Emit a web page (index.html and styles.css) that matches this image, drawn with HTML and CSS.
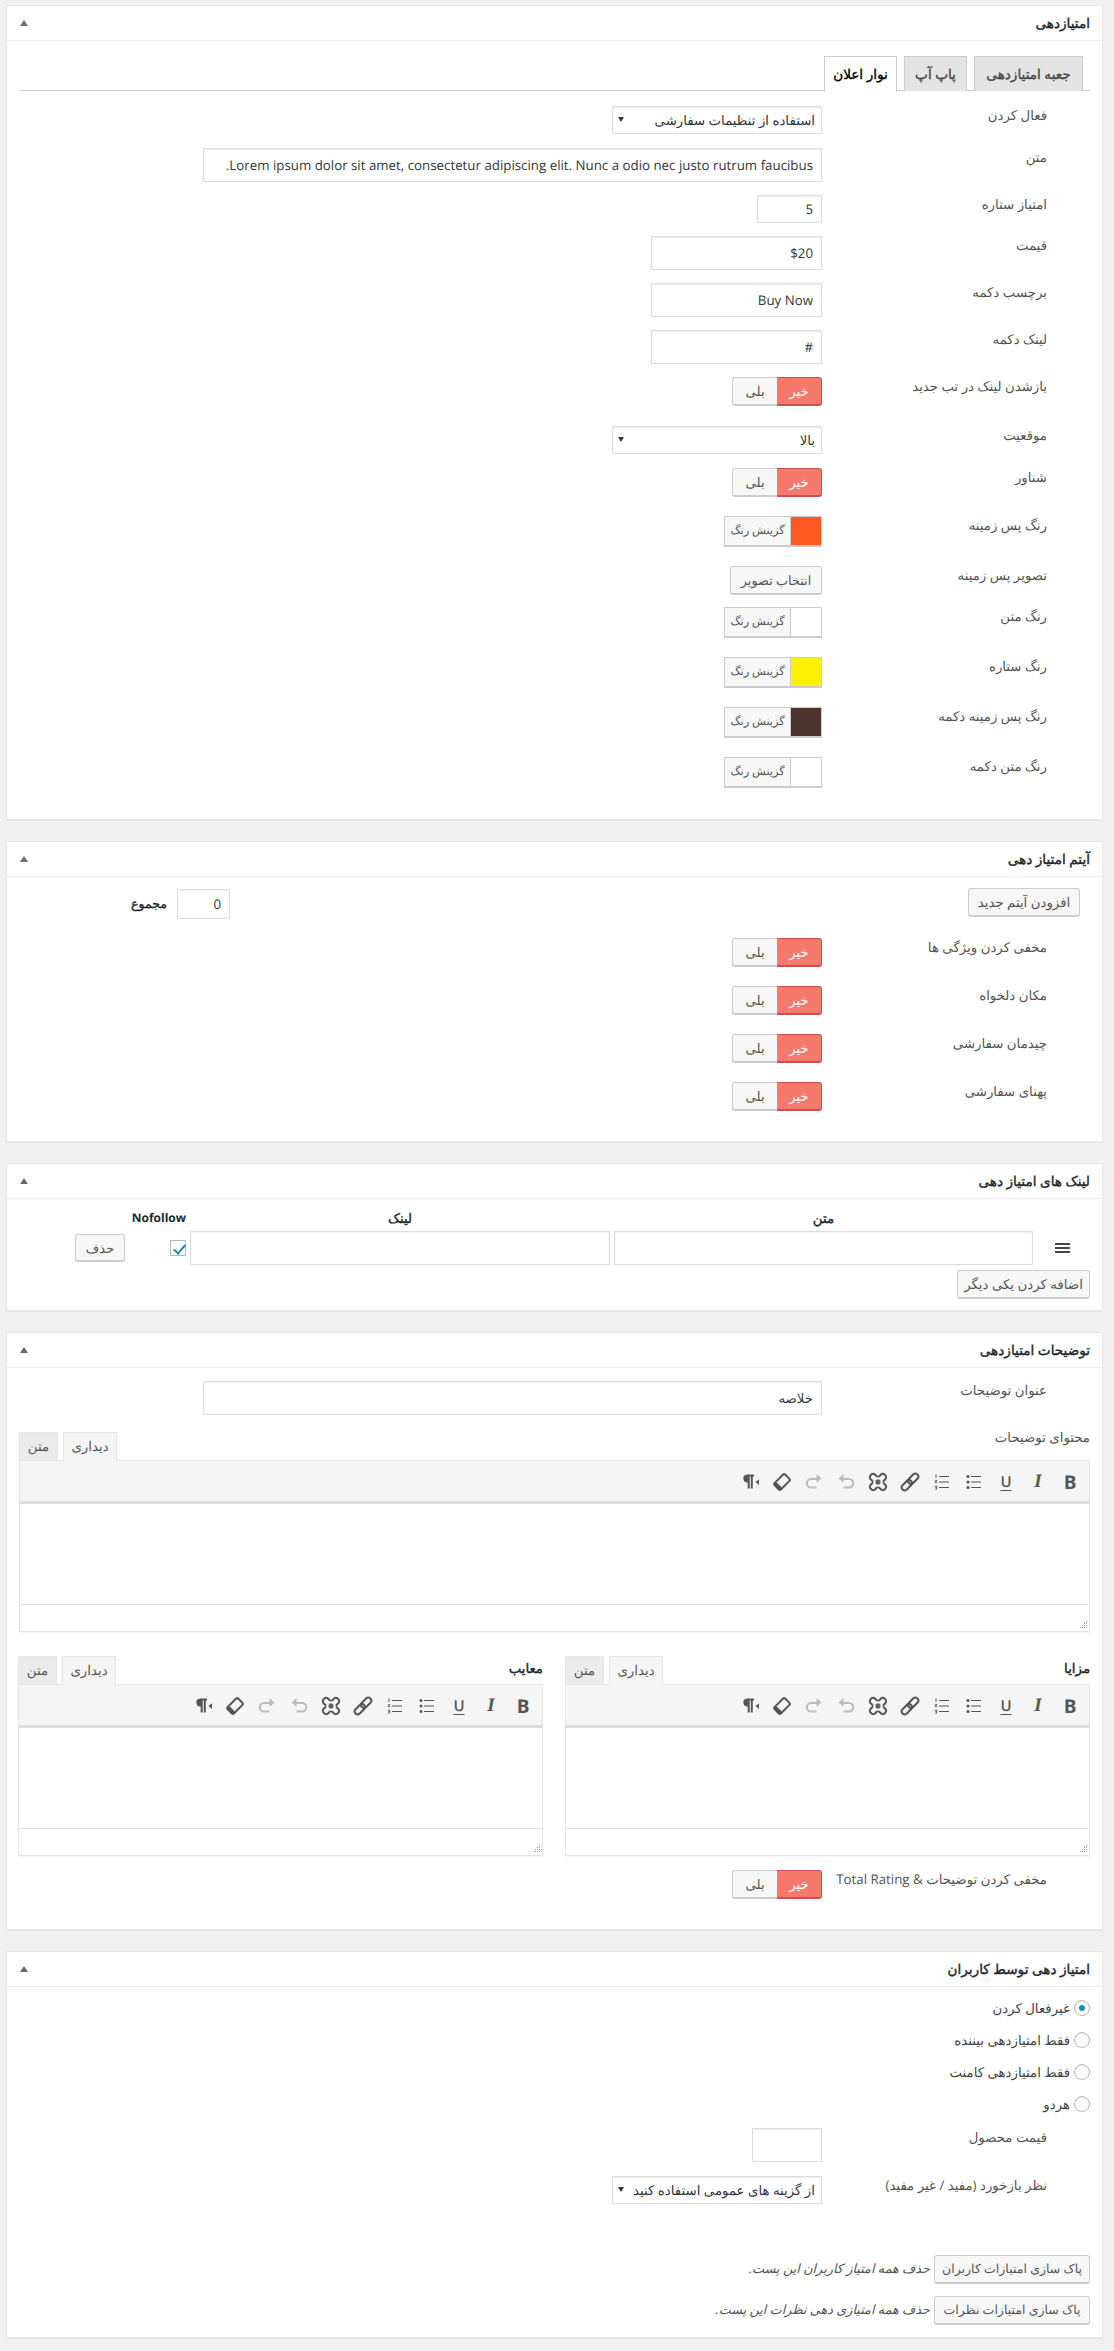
FILE: index.html
```html
<!DOCTYPE html>
<html lang="fa" dir="rtl">
<head>
<meta charset="utf-8">
<title>امتیازدهی</title>
<link rel="stylesheet" href="styles.css">
</head>
<body>
<svg class="defs" width="0" height="0" aria-hidden="true">
  <symbol id="i-ul" viewBox="0 0 20 20"><circle cx="4" cy="4.500" r="1.500"/><circle cx="4" cy="10" r="1.500"/><circle cx="4" cy="15.500" r="1.500"/><path d="M7 4h10v1H7zM7 9.500h10v1H7zM7 15h10v1H7z"/></symbol>
  <symbol id="i-ol" viewBox="0 0 20 20"><path d="M7 4h10v1H7zM7 9.500h10v1H7zM7 15h10v1H7z"/><path d="M3.500 2.500h1v3.500h-1zM2.700 8.200h2.500v.8l-1.400 1.300h1.400v.7H2.700v-.7l1.400-1.300H2.700zM2.700 13.800h2.500v3.600H2.700v-.7h1.600v-.8H3.200v-.6h1.100v-.8H2.700z"/></symbol>
  <symbol id="i-link" viewBox="0 0 20 20"><g fill="none" stroke="currentColor" stroke-width="2" transform="rotate(-45 10 10)"><rect x="-.5" y="7" width="12" height="6" rx="3"/><rect x="8.500" y="7" width="12" height="6" rx="3"/></g></symbol>
  <symbol id="i-unlink" viewBox="0 0 20 20"><g fill="none" stroke="currentColor" stroke-width="2" stroke-linecap="round"><path d="M11 4.500 12.800 2.700a2.800 2.800 0 0 1 4 0l.5.5a2.800 2.800 0 0 1 0 4L15.500 9"/><path d="M9 15.500 7.200 17.300a2.800 2.800 0 0 1-4 0l-.5-.5a2.800 2.800 0 0 1 0-4L4.500 11"/><path d="M4.500 9 2.700 7.200a2.800 2.800 0 0 1 0-4l.5-.5a2.800 2.800 0 0 1 4 0L9 4.500"/><path d="M15.500 11l1.800 1.800a2.800 2.800 0 0 1 0 4l-.5.5a2.800 2.800 0 0 1-4 0L11 15.500"/></g><path fill="none" stroke="currentColor" stroke-width="1.100" d="M10 7v6M7 10h6M8 8l4 4M12 8l-4 4"/></symbol>
  <symbol id="i-undo" viewBox="0 0 20 20"><path d="M7.500 2 2.500 6.500l5 4.500V8h5.500a3.200 3.200 0 0 1 0 6.400H7.500v2.100H13a5.300 5.300 0 0 0 0-10.600H7.500z"/></symbol>
  <symbol id="i-redo" viewBox="0 0 20 20"><path d="M12.500 2l5 4.500-5 4.500V8H7a3.200 3.200 0 0 0 0 6.400h5.500v2.100H7A5.300 5.300 0 0 1 7 5.900h5.500z"/></symbol>
  <symbol id="i-eraser" viewBox="0 0 20 20"><g transform="rotate(-45 10 10)"><rect x="2.500" y="5.500" width="15" height="9" rx="1.800" fill="none" stroke="currentColor" stroke-width="2"/><rect x="2.500" y="5.500" width="3.500" height="9" rx="1.500"/></g></symbol>
  <symbol id="i-para" viewBox="0 0 20 20"><path d="M7 2.500h7V4.500h-1.200V16.500H10.800V4.500H9.700V16.500H7.700V10.500A4 4 0 0 1 7 2.500z"/><path d="M19 7.200v5.800l-3.500-2.900z"/></symbol>
  <symbol id="i-grip" viewBox="0 0 10 10"><path d="M8 1h1v1H8zM6 3h1v1H6zM8 3h1v1H8zM4 5h1v1H4zM6 5h1v1H6zM8 5h1v1H8zM2 7h1v1H2zM4 7h1v1H4zM6 7h1v1H6zM8 7h1v1H8z"/></symbol>
</svg>

<section class="panel">
  <header class="panel-head"><h2>امتیازدهی</h2><span class="fold"></span></header>
  <div class="panel-body body-first">
    <nav class="tabs">
      <span class="tab tab-a">جعبه امتیازدهی</span>
      <span class="tab tab-b">پاپ آپ</span>
      <span class="tab tab-c tab-on">نوار اعلان</span>
    </nav>
    <div class="row row-select"><label>فعال کردن</label><div class="select-wrap"><select class="select"><option>استفاده از تنظیمات سفارشی</option></select></div></div>
    <div class="row row-input"><label>متن</label><input class="input w-full" value="Lorem ipsum dolor sit amet, consectetur adipiscing elit. Nunc a odio nec justo rutrum faucibus."></div>
    <div class="row row-input"><label>امتیاز ستاره</label><input class="input w-num" value="5"></div>
    <div class="row row-input"><label>قیمت</label><input class="input w-mid" value="$20"></div>
    <div class="row row-input"><label>برچسب دکمه</label><input class="input w-mid" value="Buy Now"></div>
    <div class="row row-input"><label>لینک دکمه</label><input class="input w-mid" value="#"></div>
    <div class="row row-toggle row-wide"><label>بازشدن لینک در تب جدید</label><div class="toggle"><span class="no">خیر</span><span class="yes">بلی</span></div></div>
    <div class="row row-select"><label>موقعیت</label><div class="select-wrap"><select class="select"><option>بالا</option></select></div></div>
    <div class="row row-toggle"><label>شناور</label><div class="toggle"><span class="no">خیر</span><span class="yes">بلی</span></div></div>
    <div class="row row-color"><label>رنگ پس زمینه</label><div class="color"><span class="swatch c-orange"></span><span class="pick">گزینش رنگ</span></div></div>
    <div class="row row-btn"><label>تصویر پس زمینه</label><button class="btn btn-img">انتخاب تصویر</button></div>
    <div class="row row-color"><label>رنگ متن</label><div class="color"><span class="swatch c-white"></span><span class="pick">گزینش رنگ</span></div></div>
    <div class="row row-color"><label>رنگ ستاره</label><div class="color"><span class="swatch c-yellow"></span><span class="pick">گزینش رنگ</span></div></div>
    <div class="row row-color"><label>رنگ پس زمینه دکمه</label><div class="color"><span class="swatch c-brown"></span><span class="pick">گزینش رنگ</span></div></div>
    <div class="row row-color row-last"><label>رنگ متن دکمه</label><div class="color"><span class="swatch c-white"></span><span class="pick">گزینش رنگ</span></div></div>
  </div>
</section>

<section class="panel">
  <header class="panel-head"><h2>آیتم امتیاز دهی</h2><span class="fold"></span></header>
  <div class="panel-body body-items">
    <div class="items-top">
      <button class="btn btn-add-item">افزودن آیتم جدید</button>
      <div class="total"><input class="input w-total" value="0"><strong class="strong">مجموع</strong></div>
    </div>
    <div class="row row-toggle"><label>مخفی کردن ویژگی ها</label><div class="toggle"><span class="no">خیر</span><span class="yes">بلی</span></div></div>
    <div class="row row-toggle"><label>مکان دلخواه</label><div class="toggle"><span class="no">خیر</span><span class="yes">بلی</span></div></div>
    <div class="row row-toggle"><label>چیدمان سفارشی</label><div class="toggle"><span class="no">خیر</span><span class="yes">بلی</span></div></div>
    <div class="row row-toggle row-last"><label>پهنای سفارشی</label><div class="toggle"><span class="no">خیر</span><span class="yes">بلی</span></div></div>
  </div>
</section>

<section class="panel">
  <header class="panel-head"><h2>لینک های امتیاز دهی</h2><span class="fold"></span></header>
  <div class="panel-body body-links">
    <div class="links">
      <span></span><strong class="strong col-head">متن</strong><strong class="strong col-head">لینک</strong><strong class="col-nf">Nofollow</strong><span></span>
      <span class="drag"><i></i><i></i><i></i></span>
      <input class="input w-cell">
      <input class="input w-cell">
      <input class="check" type="checkbox" checked>
      <button class="btn btn-del">حذف</button>
    </div>
    <button class="btn btn-more">اضافه کردن یکی دیگر</button>
  </div>
</section>

<section class="panel">
  <header class="panel-head"><h2>توضیحات امتیازدهی</h2><span class="fold"></span></header>
  <div class="panel-body body-desc">
    <div class="row row-desc"><label>عنوان توضیحات</label><input class="input w-full" value="خلاصه"></div>
    <div class="editor editor-main">
      <div class="ed-head head-main"><span class="ed-label">محتوای توضیحات</span><div class="ed-tabs"><span class="ed-tab ed-on">دیداری</span><span class="ed-tab">متن</span></div></div>
      <div class="toolbar">
        <span class="tb tb-b">B</span><span class="tb tb-i">I</span><span class="tb tb-u">U</span>
        <span class="tb"><svg><use href="#i-ul"/></svg></span><span class="tb"><svg><use href="#i-ol"/></svg></span>
        <span class="tb"><svg><use href="#i-link"/></svg></span><span class="tb"><svg><use href="#i-unlink"/></svg></span>
        <span class="tb off"><svg><use href="#i-undo"/></svg></span><span class="tb off"><svg><use href="#i-redo"/></svg></span>
        <span class="tb"><svg><use href="#i-eraser"/></svg></span><span class="tb"><svg><use href="#i-para"/></svg></span>
      </div>
      <div class="ed-area"></div>
      <div class="ed-status"><svg class="grip"><use href="#i-grip"/></svg></div>
    </div>
    <div class="two">
      <div class="editor">
        <div class="ed-head"><span class="ed-label ed-label-b strong">مزایا</span><div class="ed-tabs"><span class="ed-tab ed-on">دیداری</span><span class="ed-tab">متن</span></div></div>
        <div class="toolbar">
          <span class="tb tb-b">B</span><span class="tb tb-i">I</span><span class="tb tb-u">U</span>
          <span class="tb"><svg><use href="#i-ul"/></svg></span><span class="tb"><svg><use href="#i-ol"/></svg></span>
          <span class="tb"><svg><use href="#i-link"/></svg></span><span class="tb"><svg><use href="#i-unlink"/></svg></span>
          <span class="tb off"><svg><use href="#i-undo"/></svg></span><span class="tb off"><svg><use href="#i-redo"/></svg></span>
          <span class="tb"><svg><use href="#i-eraser"/></svg></span><span class="tb"><svg><use href="#i-para"/></svg></span>
        </div>
        <div class="ed-area"></div>
        <div class="ed-status"><svg class="grip"><use href="#i-grip"/></svg></div>
      </div>
      <div class="editor">
        <div class="ed-head"><span class="ed-label ed-label-b strong">معایب</span><div class="ed-tabs"><span class="ed-tab ed-on">دیداری</span><span class="ed-tab">متن</span></div></div>
        <div class="toolbar">
          <span class="tb tb-b">B</span><span class="tb tb-i">I</span><span class="tb tb-u">U</span>
          <span class="tb"><svg><use href="#i-ul"/></svg></span><span class="tb"><svg><use href="#i-ol"/></svg></span>
          <span class="tb"><svg><use href="#i-link"/></svg></span><span class="tb"><svg><use href="#i-unlink"/></svg></span>
          <span class="tb off"><svg><use href="#i-undo"/></svg></span><span class="tb off"><svg><use href="#i-redo"/></svg></span>
          <span class="tb"><svg><use href="#i-eraser"/></svg></span><span class="tb"><svg><use href="#i-para"/></svg></span>
        </div>
        <div class="ed-area"></div>
        <div class="ed-status"><svg class="grip"><use href="#i-grip"/></svg></div>
      </div>
    </div>
    <div class="row row-toggle row-last"><label>مخفی کردن توضیحات &amp; Total Rating</label><div class="toggle"><span class="no">خیر</span><span class="yes">بلی</span></div></div>
  </div>
</section>

<section class="panel">
  <header class="panel-head"><h2>امتیاز دهی توسط کاربران</h2><span class="fold"></span></header>
  <div class="panel-body body-users">
    <label class="radio"><input type="radio" name="mode" checked><span>غیرفعال کردن</span></label>
    <label class="radio"><input type="radio" name="mode"><span>فقط امتیازدهی بیننده</span></label>
    <label class="radio"><input type="radio" name="mode"><span>فقط امتیازدهی کامنت</span></label>
    <label class="radio"><input type="radio" name="mode"><span>هردو</span></label>
    <div class="row row-price"><label>قیمت محصول</label><input class="input w-price"></div>
    <div class="row row-feedback"><label>نظر بازخورد (مفید / غیر مفید)</label><div class="select-wrap"><select class="select"><option>از گزینه های عمومی استفاده کنید</option></select></div></div>
    <div class="reset"><button class="btn">پاک سازی امتیازات کاربران</button><em>حذف همه امتیاز کاربران این پست.</em></div>
    <div class="reset"><button class="btn">پاک سازی امتیازات نظرات</button><em>حذف همه امتیازی دهی نظرات این پست.</em></div>
  </div>
</section>
</body>
</html>
```
FILE: styles.css
```css
* { box-sizing: border-box; }
html { background: #f1f1f1; }
body {
  margin: 0;
  padding: 5px 11px 12px 6px;
  background: #f1f1f1;
  color: #444;
  font: 13.3px/18px "Open Sans", "DejaVu Sans", sans-serif;
  text-rendering: geometricPrecision;
}
.defs { position: absolute; }
input, select, button { font: inherit; color: #32373c; text-rendering: geometricPrecision; }

.panel {
  background: #fff;
  border: 1px solid #e5e5e5;
  box-shadow: 0 1px 1px rgba(0,0,0,.04);
  margin-bottom: 21px;
}
.panel:last-child { margin-bottom: 0; }
.panel-head {
  display: flex;
  align-items: center;
  justify-content: space-between;
  height: 35px;
  padding: 0 12px 0 13px;
  border-bottom: 1px solid #eee;
}
.panel-head h2 {
  margin: 0;
  font-size: 13.6px;
  font-weight: 400;
  color: #23282d;
  -webkit-text-stroke: .4px #23282d;
}
.strong {
  font-weight: 400;
  font-size: 13.3px;
  color: #23282d;
  -webkit-text-stroke: .4px #23282d;
}
.fold {
  width: 0; height: 0;
  border-left: 4px solid transparent;
  border-right: 4px solid transparent;
  border-bottom: 6px solid #666d73;
}

.panel-body { padding: 0 12px; }
.body-first { padding-top: 15px; padding-bottom: 31px; }
.body-items { padding-top: 11px; padding-bottom: 30px; }
.body-links { padding-top: 10px; padding-bottom: 11px; }
.body-desc { padding-top: 13px; padding-bottom: 30px; }
.body-users { padding-top: 5px; padding-bottom: 12px; }

.tabs {
  display: flex;
  gap: 7px;
  height: 35px;
  padding-right: 7px;
  border-bottom: 1px solid #ccc;
  margin-bottom: 15px;
}
.tab {
  height: 35px;
  line-height: 33px;
  text-align: center;
  font-size: 13.6px;
  color: #444;
  -webkit-text-stroke: .35px #444;
  background: #e4e4e4;
  border: 1px solid #ccc;
  border-bottom: 0;
  white-space: nowrap;
}
.tab-a { width: 109px; }
.tab-b { width: 63px; }
.tab-c { width: 73px; }
.tab-on { background: #fff; color: #000; -webkit-text-stroke-color: #000; height: 36px; }

.row { display: flex; padding-right: 43px; align-items: flex-start; }
.row > label { flex: 0 0 225px; color: #555; white-space: nowrap; font-size: 13.3px; }
.row-select { margin-bottom: 14px; }
.row-input { margin-bottom: 13px; }
.row-toggle { margin-bottom: 19px; }
.row-wide { margin-bottom: 20px; }
.row-color { margin-bottom: 19px; }
.row-btn { margin-bottom: 12px; }
.row-desc { margin-bottom: 13px; }
.row-price { margin-top: 8px; margin-bottom: 14px; }
.row-feedback { margin-bottom: 51px; }
.row-last { margin-bottom: 0; }

.input {
  height: 34px;
  padding: 0 8px;
  border: 1px solid #ddd;
  background: #fff;
  box-shadow: inset 0 1px 2px rgba(0,0,0,.07);
  outline: 0;
  border-radius: 0;
  display: block;
}
.w-full { width: 619px; }
.w-num { width: 65px; height: 28px; }
.w-mid { width: 171px; }
.w-total { width: 53px; height: 30px; }
.w-cell { width: 100%; }
.w-price { width: 70px; }

.select-wrap { position: relative; width: 210px; }
.select-wrap::after {
  content: "";
  position: absolute;
  left: 6px;
  top: 11px;
  border-left: 3px solid transparent;
  border-right: 3px solid transparent;
  border-top: 5px solid #32373c;
}
.select {
  appearance: none;
  display: block;
  width: 100%;
  height: 28px;
  padding: 0 6px 0 20px;
  border: 1px solid #ddd;
  border-radius: 0;
  background: #fff;
  box-shadow: inset 0 1px 2px rgba(0,0,0,.07);
  outline: 0;
}

.toggle {
  display: flex;
  width: 90px;
  height: 29px;
  line-height: 26px;
  font-size: 13.3px;
  text-align: center;
}
.toggle .no {
  flex: 0 0 45px;
  color: #fff;
  background: #f6796d;
  border: solid #c9534a;
  border-width: 1px 1px 2px 0;
  border-radius: 0 3px 3px 0;
}
.toggle .yes {
  flex: 0 0 45px;
  color: #555;
  background: #f7f7f7;
  border: solid #ccc;
  border-width: 1px 0 2px 1px;
  border-radius: 3px 0 0 3px;
}

.color {
  display: flex;
  width: 98px;
  height: 31px;
  border: 1px solid #ccc;
  border-bottom-width: 2px;
}
.swatch { flex: 0 0 31px; border-left: 1px solid #ccc; }
.pick {
  flex: 1;
  background: #f7f7f7;
  font-size: 11.300px;
  line-height: 28px;
  text-align: center;
  color: #555;
  white-space: nowrap;
}
.c-orange { background: #ff5722; }
.c-white { background: #fff; }
.c-yellow { background: #fff200; }
.c-brown { background: #4a342c; }

.btn {
  height: 29px;
  padding: 0;
  border: 1px solid #ccc;
  border-bottom-width: 2px;
  border-radius: 3px;
  background: #f7f7f7;
  color: #555;
  font-size: 12.800px;
  line-height: 24px;
  white-space: nowrap;
  display: block;
}
.btn-img { width: 92px; }

.items-top { display: flex; align-items: flex-start; padding-right: 10px; margin-bottom: 19px; }
.btn-add-item { width: 112px; font-size: 13.300px; }
.total { display: flex; align-items: center; gap: 10px; margin-right: auto; margin-left: 112px; margin-top: 1px; }
.total .strong { flex: 0 0 36px; font-size: 12.500px; white-space: nowrap; }

.links {
  display: grid;
  grid-template-columns: 53px 419px 420px 57px 50px;
  column-gap: 4px;
  row-gap: 4px;
  align-items: center;
  margin-bottom: 5px;
}
.col-head { text-align: center; }
.col-nf { text-align: right; font-size: 12px; font-weight: 700; color: #23282d; white-space: nowrap; }
.drag { display: flex; flex-direction: column; gap: 2px; width: 15px; margin-right: 20px; }
.drag i { display: block; height: 2px; background: #444; }
.check {
  appearance: none;
  width: 16px; height: 16px;
  margin: 0;
  border: 1px solid #b4b9be;
  background: #fff;
  position: relative;
}
.check::after {
  content: "";
  position: absolute;
  left: 5px; top: 1px;
  width: 5px; height: 10px;
  border: solid #1e8cbe;
  border-width: 0 2.500px 2.500px 0;
  transform: rotate(40deg);
}
.btn-del { width: 50px; height: 28px; font-size: 13px; }
.btn-more { width: 133px; font-size: 13.300px; }

.editor-main { margin-bottom: 24px; }
.ed-head { display: flex; align-items: flex-start; height: 28px; }
.head-main { height: 32px; }
.head-main .ed-tabs { align-self: flex-end; }
.ed-label { color: #555; white-space: nowrap; font-size: 13.300px; }
.ed-label-b { margin-top: 3px; color: #23282d; }
.ed-tabs { display: flex; gap: 5px; margin-right: auto; height: 28px; }
.ed-tab {
  width: 39px;
  height: 28px;
  line-height: 26px;
  text-align: center;
  font-size: 13.300px;
  color: #555;
  background: #ebebeb;
  border: 1px solid #e5e5e5;
  border-bottom: 0;
  white-space: nowrap;
}
.ed-on { width: 54px; background: #f5f5f5; height: 29px; position: relative; z-index: 1; }
.toolbar {
  display: flex;
  height: 44px;
  padding: 5px 3px 0;
  background: #f5f5f5;
  border: 1px solid #e5e5e5;
  border-bottom: 3px solid #ddd;
}
.tb {
  flex: 0 0 32px;
  height: 32px;
  color: #555;
  fill: #555;
  display: flex;
  align-items: center;
  justify-content: center;
}
.tb svg { width: 20px; height: 20px; display: block; }
.tb.off { color: #bbb; fill: #bbb; }
.tb-b { font: 700 19px "Open Sans", sans-serif; }
.tb-i { font: italic 700 19px "Liberation Serif", serif; }
.tb-u { font: 600 15px "Open Sans", sans-serif; text-decoration: underline; text-underline-offset: 3px; }
.ed-area { height: 100px; border: 1px solid #e5e5e5; border-width: 0 1px; }
.ed-status {
  height: 28px;
  border: 1px solid #e5e5e5;
  border-top-color: #ddd;
  direction: ltr;
  position: relative;
  box-shadow: 0 1px 1px rgba(0,0,0,.04);
}
.grip { position: absolute; right: 1px; bottom: 1px; width: 10px; height: 10px; fill: #999; }

.two { display: grid; grid-template-columns: 525px 525px; column-gap: 22px; margin-bottom: 14px; }

.radio { display: flex; align-items: center; gap: 4px; height: 32px; color: #444; font-size: 13.300px; }
.radio input {
  appearance: none;
  width: 16px; height: 16px;
  margin: 0;
  border: 1px solid #b4b9be;
  border-radius: 50%;
  background: #fff;
  box-shadow: inset 0 1px 2px rgba(0,0,0,.1);
  display: flex;
  align-items: center;
  justify-content: center;
}
.radio input:checked::before {
  content: "";
  width: 6px; height: 6px;
  border-radius: 50%;
  background: #1e8cbe;
}
.reset { display: flex; align-items: flex-start; gap: 4px; margin-bottom: 12px; }
.reset:last-child { margin-bottom: 0; }
.reset .btn { width: 156px; font-size: 12.500px; }
.reset em { color: #555; line-height: 26px; font-size: 12.800px; }
```
